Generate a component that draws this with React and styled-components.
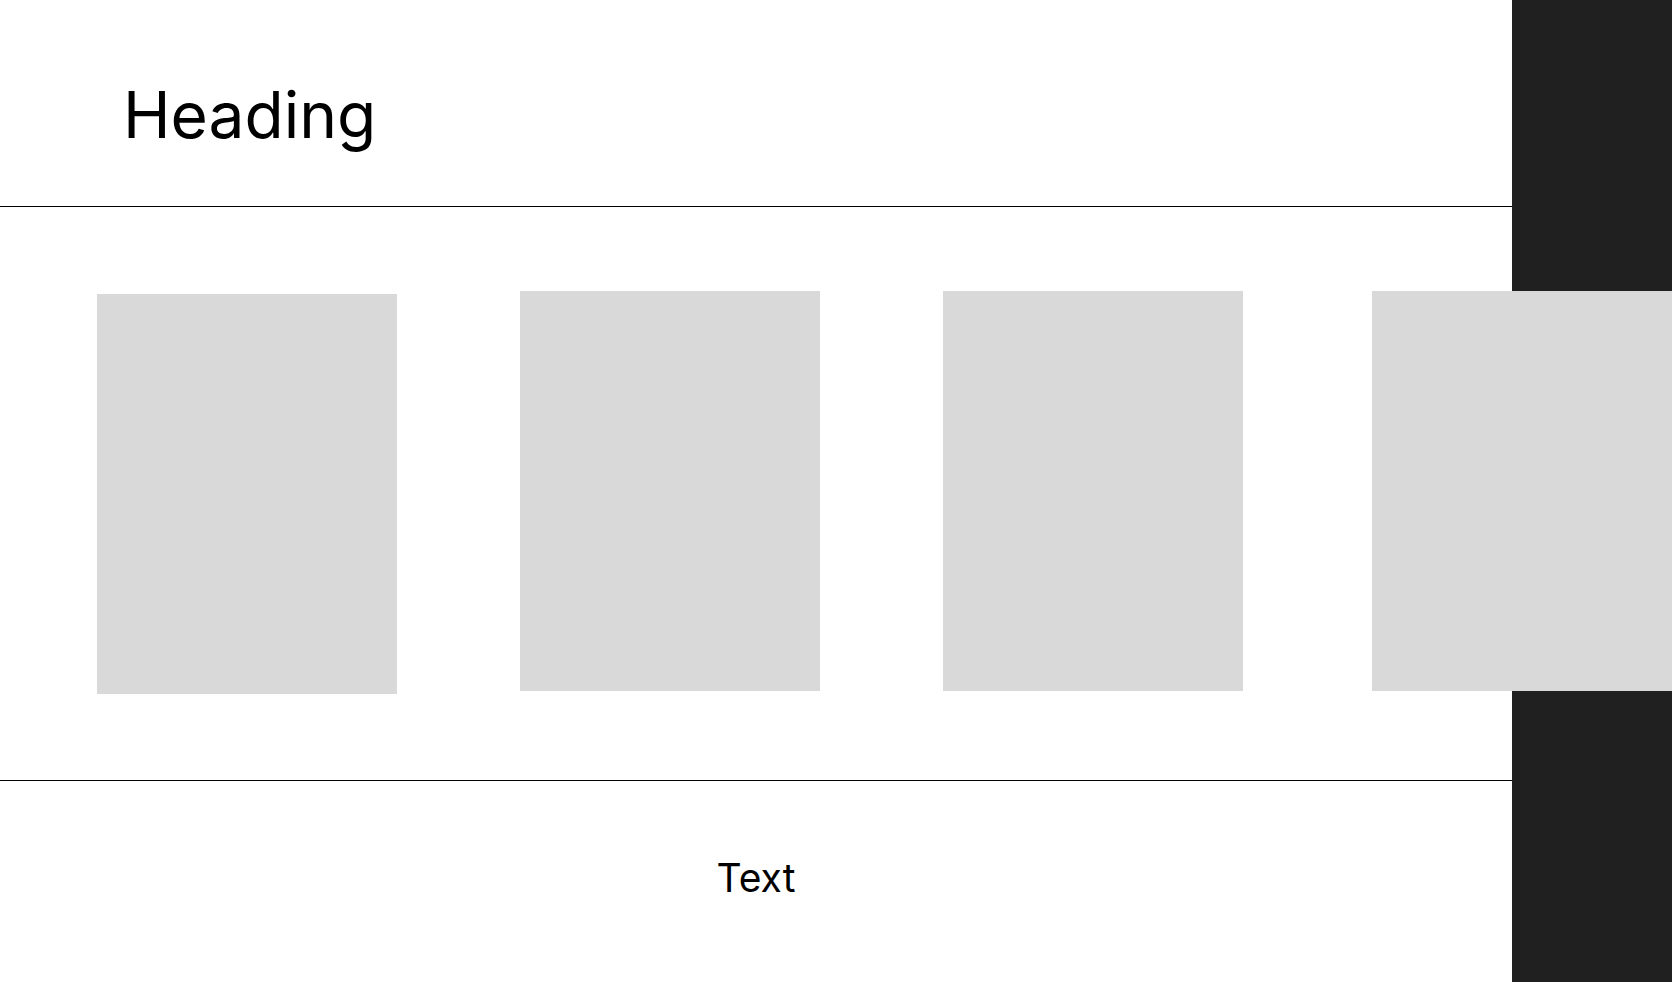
import React from "react";
import styled, { createGlobalStyle } from "styled-components";

const GlobalStyle = createGlobalStyle`
  html, body { margin: 0; padding: 0; background: #ffffff; }
  body { font-family: Inter, "Noto Sans", sans-serif; overflow: hidden; }
`;

const Page = styled.div`
  position: relative;
  width: 1672px;
  height: 982px;
  overflow: hidden;
  background: #ffffff;
`;

const SidePanel = styled.div`
  position: absolute;
  top: 0;
  right: 0;
  width: 160px;
  height: 100%;
  background: #202020;
`;

const Main = styled.div`
  width: 1512px;
  display: flex;
  flex-direction: column;
`;

const Header = styled.header`
  height: 207px;
  box-sizing: border-box;
  padding: 75px 0 0 123px;
  border-bottom: 1px solid #000000;
`;

const Heading = styled.h1`
  margin: 0;
  font-family: Inter, sans-serif;
  font-weight: 400;
  font-size: 64px;
  line-height: 80px;
  color: #000000;
`;

const Gallery = styled.section`
  position: relative;
  z-index: 1;
  height: 574px;
  box-sizing: border-box;
  padding: 84px 0 0 97px;
  border-bottom: 1px solid #000000;
  display: flex;
  align-items: flex-start;
`;

const Card = styled.div`
  flex: none;
  width: 300px;
  height: 400px;
  background: #d9d9d9;
  margin-top: ${(p) => p.$offset || 0}px;
  margin-left: ${(p) => p.$gap || 0}px;
`;

const Footer = styled.footer`
  height: 201px;
  display: flex;
  justify-content: center;
  box-sizing: border-box;
  padding-top: 73px;
`;

const Caption = styled.p`
  margin: 0;
  font-family: Inter, sans-serif;
  font-weight: 400;
  font-size: 39px;
  line-height: 47px;
  color: #000000;
`;

const cards = [
  { offset: 3, gap: 0 },
  { offset: 0, gap: 123 },
  { offset: 0, gap: 123 },
  { offset: 0, gap: 129 },
];

export default function App() {
  return (
    <Page>
      <GlobalStyle />
      <SidePanel />
      <Main>
        <Header>
          <Heading>Heading</Heading>
        </Header>
        <Gallery>
          {cards.map((c, i) => (
            <Card key={i} $offset={c.offset} $gap={c.gap} />
          ))}
        </Gallery>
        <Footer>
          <Caption>Text</Caption>
        </Footer>
      </Main>
    </Page>
  );
}
